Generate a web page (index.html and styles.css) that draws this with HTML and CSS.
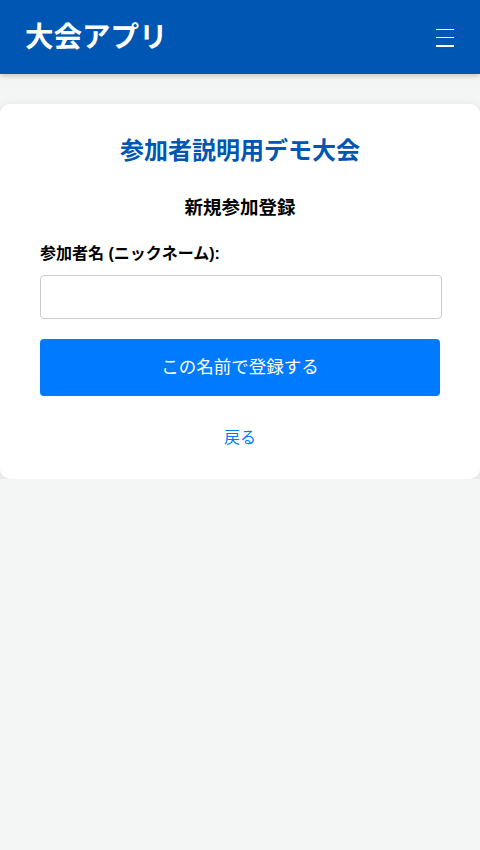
FILE: index.html
```html
<!DOCTYPE html>
<html lang="ja">
<head>
<meta charset="utf-8">
<meta name="viewport" content="width=device-width, initial-scale=1">
<title>大会アプリ</title>
<link rel="stylesheet" href="styles.css">
</head>
<body>
<header class="app-header">
  <h1 class="app-title">大会アプリ</h1>
  <button class="menu-btn" aria-label="メニュー">
    <span class="menu-line"></span>
    <span class="menu-line"></span>
    <span class="menu-line"></span>
  </button>
</header>
<main class="main">
  <section class="card">
    <h2 class="event-title">参加者説明用デモ大会</h2>
    <h3 class="form-title">新規参加登録</h3>
    <form class="form">
      <label class="label" for="nickname">参加者名 (ニックネーム):</label>
      <input class="input" id="nickname" type="text">
      <button class="submit" type="button">この名前で登録する</button>
    </form>
    <a class="back" href="#">戻る</a>
  </section>
</main>
</body>
</html>
```
FILE: styles.css
```css
* { box-sizing: border-box; }
body {
  margin: 0;
  background: #f4f5f5;
  font-family: "Liberation Sans", "Noto Sans CJK JP", sans-serif;
  color: #000;
}
.app-header {
  height: 74px;
  background: #0056b3;
  display: flex;
  align-items: center;
  justify-content: space-between;
  padding: 0 25px 0 25px;
  box-shadow: 0 2px 5px rgba(0,0,0,0.2);
}
.app-title {
  margin: 1px 0 0;
  color: #fff;
  font-size: 28.5px;
  font-weight: 700;
  line-height: 1;
}
.menu-btn {
  background: none;
  border: 0;
  padding: 0;
  width: 18px;
  height: 18px;
  display: flex;
  flex-direction: column;
  justify-content: space-between;
  margin-right: 1px;
  margin-top: 1px;
}
.menu-line {
  display: block;
  height: 1.5px;
  background: #fff;
  width: 18px;
}
.main {
  padding-top: 30px;
}
.card {
  background: #fff;
  border-radius: 10px;
  box-shadow: 0 4px 14px rgba(0,0,0,0.12);
  padding: 33px 40px 32px 40px;
  display: flex;
  flex-direction: column;
}
.event-title {
  margin: 0;
  text-align: center;
  color: #0056b3;
  font-size: 24px;
  font-weight: 700;
  line-height: 28px;
}
.form-title {
  margin: 32px 0 0;
  text-align: center;
  font-size: 18.5px;
  font-weight: 700;
  line-height: 22px;
}
.form {
  display: flex;
  flex-direction: column;
  margin-top: 25px;
}
.label {
  font-size: 16px;
  font-weight: 700;
  line-height: 19px;
}
.input {
  margin-top: 12px;
  width: 402px;
  height: 44px;
  border: 1px solid #ccc;
  border-radius: 4px;
  padding: 10px;
  font-size: 16px;
}
.submit {
  margin-top: 20px;
  width: 400px;
  height: 57px;
  background: #007bff;
  color: #fff;
  border: 0;
  border-radius: 4px;
  font-family: inherit;
  font-size: 17.5px;
  line-height: 21px;
}
.back {
  margin-top: 32px;
  align-self: center;
  color: #007bff;
  text-decoration: none;
  font-size: 16px;
  line-height: 19px;
}
```
